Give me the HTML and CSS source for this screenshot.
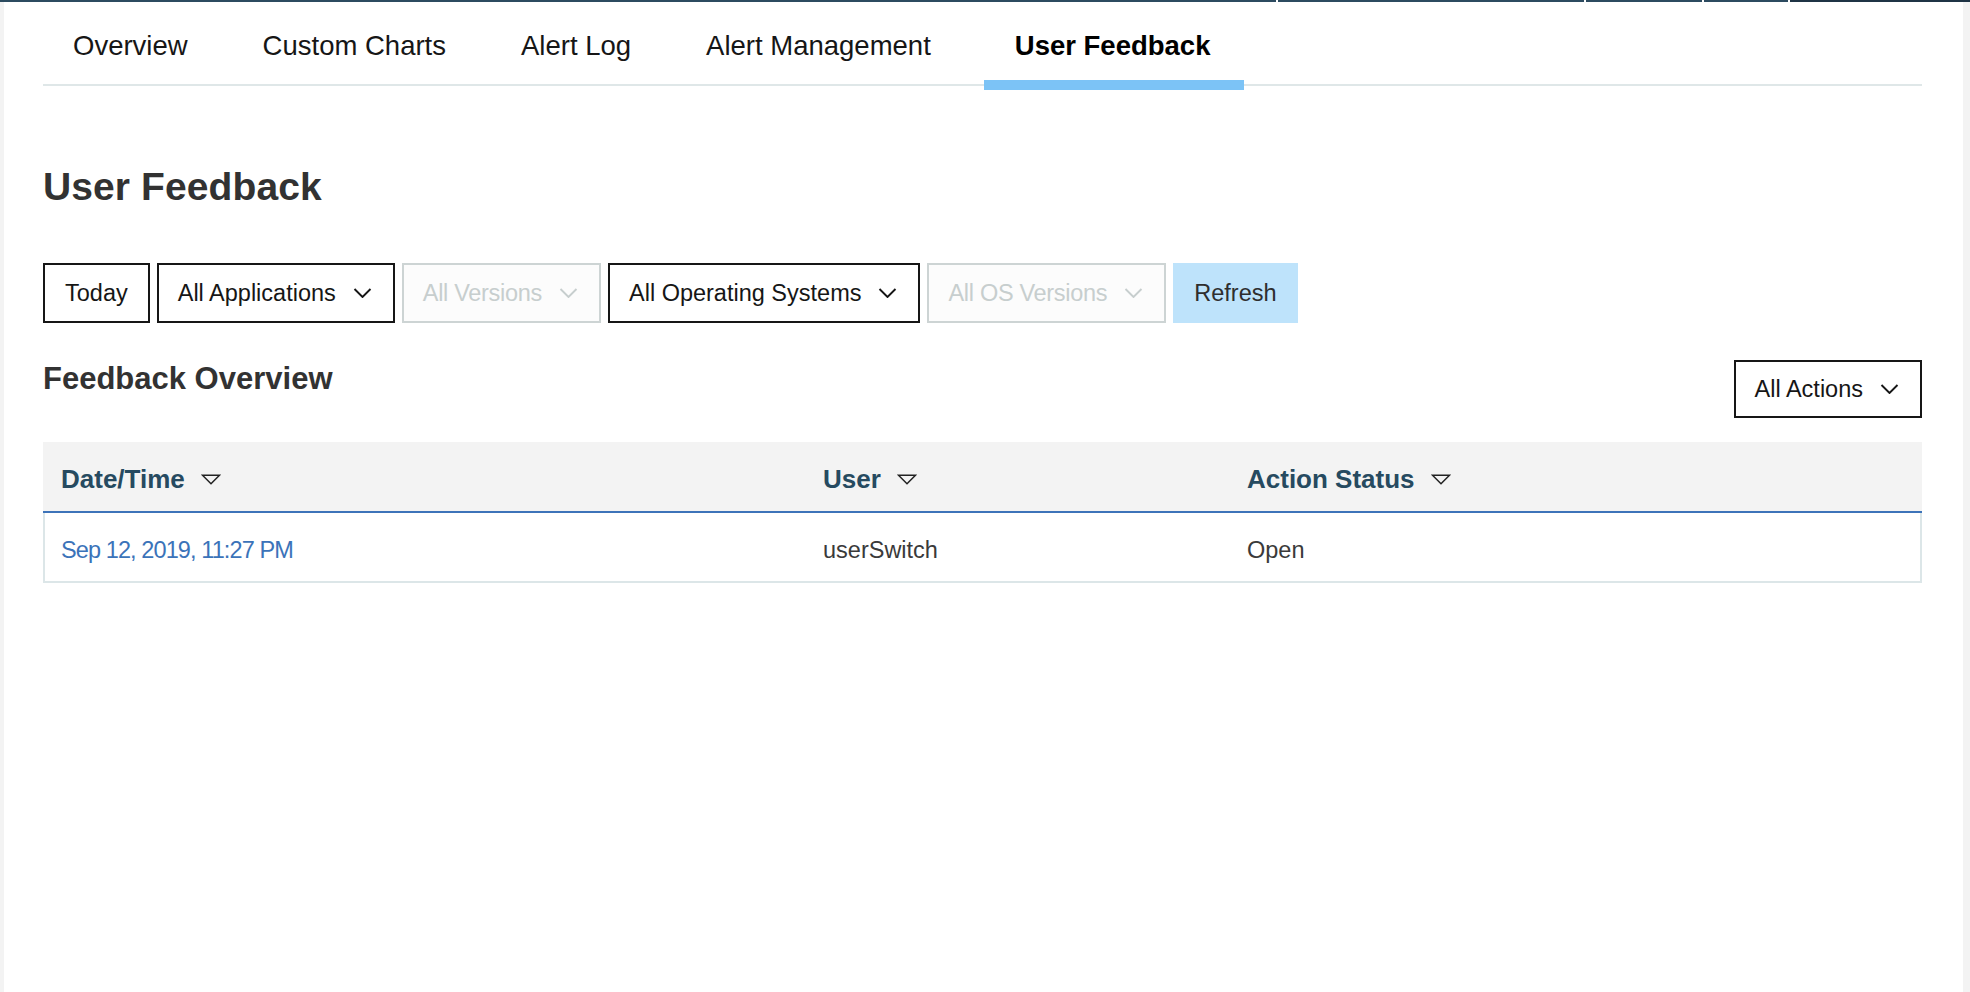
FILE: index.html
```html
<!DOCTYPE html>
<html lang="en">
<head>
<meta charset="utf-8">
<title>User Feedback</title>
<link rel="stylesheet" href="styles.css">
</head>
<body>
<div class="topbar">
  <span class="seg seg-1"></span>
  <span class="seg seg-2"></span>
  <span class="seg seg-3"></span>
  <span class="seg seg-4"></span>
  <span class="seg seg-5"></span>
</div>
<div class="page">
  <div class="content">
    <nav class="tabs">
      <a class="tab">Overview</a>
      <a class="tab">Custom Charts</a>
      <a class="tab">Alert Log</a>
      <a class="tab">Alert Management</a>
      <a class="tab active">User Feedback</a>
    </nav>

    <h1 class="title">User Feedback</h1>

    <div class="filters">
      <button class="btn today">Today</button>
      <button class="btn dd">All Applications
        <svg class="chev" viewBox="0 0 18 10"><path d="M1 1l8 8 8-8"/></svg>
      </button>
      <button class="btn dd disabled">All Versions
        <svg class="chev" viewBox="0 0 18 10"><path d="M1 1l8 8 8-8"/></svg>
      </button>
      <button class="btn dd">All Operating Systems
        <svg class="chev" viewBox="0 0 18 10"><path d="M1 1l8 8 8-8"/></svg>
      </button>
      <button class="btn dd disabled">All OS Versions
        <svg class="chev" viewBox="0 0 18 10"><path d="M1 1l8 8 8-8"/></svg>
      </button>
      <button class="btn refresh">Refresh</button>
    </div>

    <div class="section-head">
      <h2 class="subtitle">Feedback Overview</h2>
      <button class="btn dd">All Actions
        <svg class="chev" viewBox="0 0 18 10"><path d="M1 1l8 8 8-8"/></svg>
      </button>
    </div>

    <div class="table">
      <div class="thead">
        <div class="th">Date/Time <svg class="sort" viewBox="0 0 20 11"><path d="M1.5 1.2h17l-8.5 8.6z"/></svg></div>
        <div class="th">User <svg class="sort" viewBox="0 0 20 11"><path d="M1.5 1.2h17l-8.5 8.6z"/></svg></div>
        <div class="th">Action Status <svg class="sort" viewBox="0 0 20 11"><path d="M1.5 1.2h17l-8.5 8.6z"/></svg></div>
      </div>
      <div class="tr">
        <div class="td link">Sep 12, 2019, 11:27 PM</div>
        <div class="td">userSwitch</div>
        <div class="td">Open</div>
      </div>
    </div>
  </div>
</div>
</body>
</html>
```

FILE: styles.css
```css
* { box-sizing: border-box; }

html, body {
  margin: 0;
  padding: 0;
}

body {
  background: #f3f3f3;
  font-family: "Liberation Sans", Arial, Helvetica, sans-serif;
  color: #161616;
}

.topbar {
  display: flex;
  gap: 2px;
  height: 2px;
  background: #ffffff;
}

.seg { display: block; height: 2px; background: #2c4b60; }
.seg-1 { width: 1276px; }
.seg-2 { width: 306px; }
.seg-3 { width: 116px; }
.seg-4 { width: 84px; }
.seg-5 { flex: 1; background: #1f3445; }

.page {
  margin: 0 7px 0 4px;
  background: #ffffff;
  min-height: calc(100vh - 2px);
}

.content {
  padding: 0 41px 0 39px;
}

/* Tabs */
.tabs {
  display: flex;
  gap: 13px;
  border-bottom: 2px solid #dfe7e8;
}

.tab {
  position: relative;
  display: block;
  padding: 26px 31px 20px;
  font-size: 27.5px;
  line-height: 36px;
  color: #161616;
  white-space: nowrap;
}

.tab:first-child { padding-left: 30px; }

.tab.active {
  font-weight: bold;
  color: #000000;
  margin-left: 9px;
  padding-right: 34px;
}

.tab.active::after {
  content: "";
  position: absolute;
  left: 0;
  right: 0;
  bottom: -6px;
  height: 10px;
  background: #7cc3f6;
}

/* Title */
.title {
  margin: 81px 0 0;
  font-size: 39px;
  line-height: 39px;
  font-weight: bold;
  color: #323232;
  letter-spacing: 0.1px;
}

/* Filters */
.filters {
  display: flex;
  gap: 7px;
  margin-top: 57px;
}

.btn {
  display: inline-flex;
  align-items: center;
  height: 60px;
  padding: 0 19px;
  border: 2px solid #161616;
  background: #ffffff;
  font-family: "Liberation Sans", Arial, Helvetica, sans-serif;
  font-size: 23.5px;
  color: #161616;
  white-space: nowrap;
  cursor: pointer;
}

.btn.today { padding: 0 20px; }

.btn.dd { padding-right: 21px; }

.chev {
  width: 19px;
  height: 10px;
  margin-left: 17px;
  fill: none;
  stroke: currentColor;
  stroke-width: 1.9;
}

.btn.disabled {
  border-color: #cdd4d4;
  background: #fcfcfc;
  color: #c7cece;
  letter-spacing: -0.3px;
}

.btn.refresh {
  border-color: #bee3fb;
  background: #bee3fb;
  color: #2e2e2e;
  padding: 0 19px;
}

/* Section head */
.section-head {
  display: flex;
  justify-content: space-between;
  align-items: flex-start;
  margin-top: 37px;
}

.section-head .btn { height: 58px; }

.subtitle {
  margin: 3px 0 0;
  font-size: 31px;
  line-height: 31px;
  font-weight: bold;
  color: #323232;
}

/* Table */
.table {
  margin-top: 24px;
}

.thead,
.tr {
  display: grid;
  grid-template-columns: 762px 424px 1fr;
}

.thead {
  background: #f3f3f3;
  border-bottom: 2px solid #3d73b9;
}

.th {
  display: flex;
  align-items: center;
  gap: 16px;
  padding: 24px 18px 19px;
  font-size: 26px;
  line-height: 26px;
  font-weight: bold;
  color: #264a60;
}

.sort {
  width: 20px;
  height: 11px;
  fill: none;
  stroke: #222222;
  stroke-width: 1.5;
}

.tr {
  border: 2px solid #dce6e8;
  border-top: none;
}

.td {
  padding: 25px 16px 19px;
  font-size: 23.5px;
  line-height: 24px;
  color: #3a3a3a;
}

.td.link {
  color: #3b73b9;
  letter-spacing: -0.9px;
}
```
